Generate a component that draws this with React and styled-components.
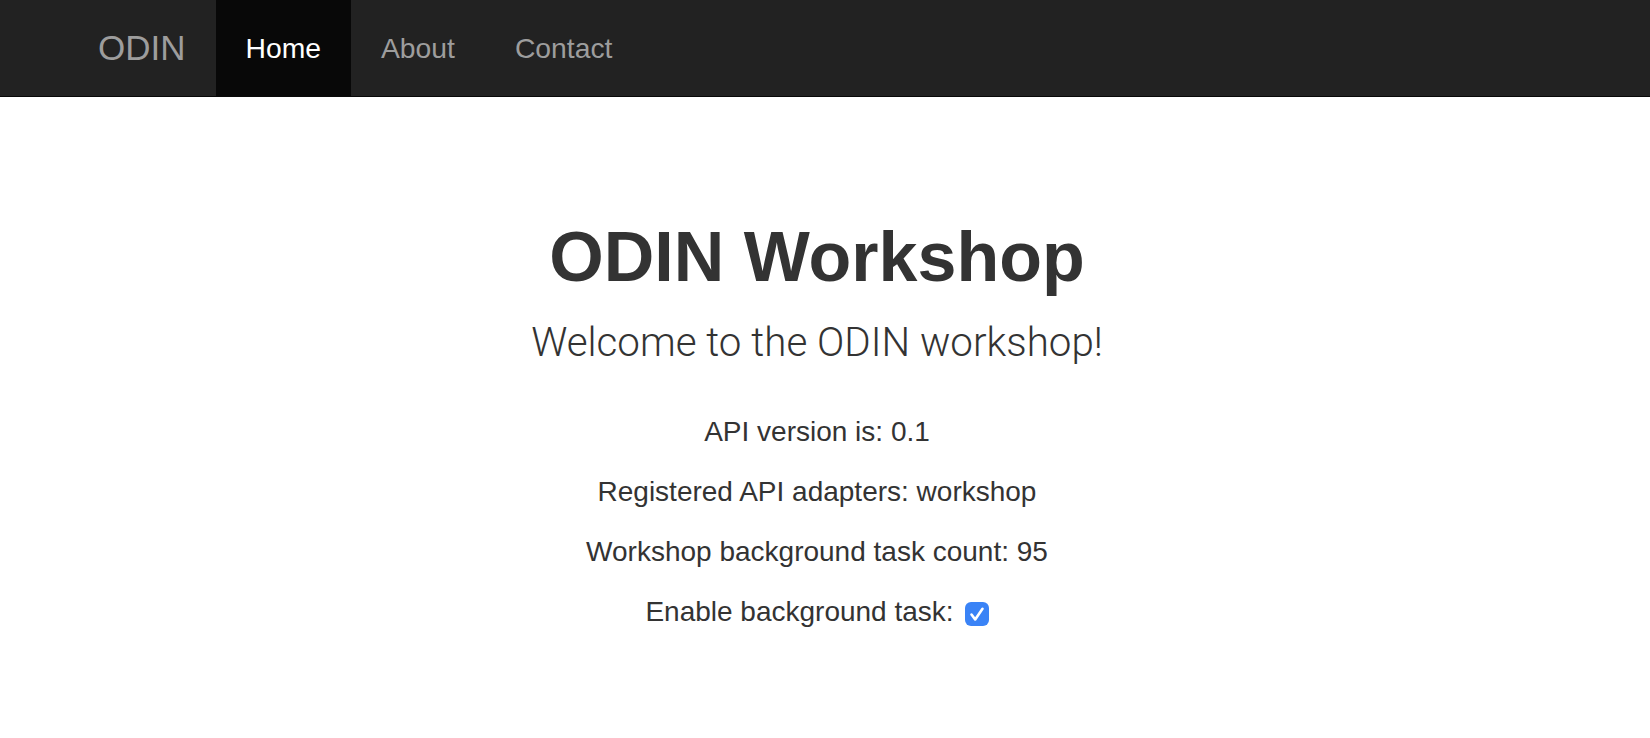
import React, { useState } from 'react';
import styled, { createGlobalStyle } from 'styled-components';

const GlobalStyle = createGlobalStyle`
  html, body {
    margin: 0;
    padding: 0;
    background: #fff;
  }
  body {
    font-family: "Liberation Sans", Arial, sans-serif;
    color: #333;
  }
`;

const Navbar = styled.nav`
  display: flex;
  align-items: stretch;
  height: 96px;
  padding-left: 69px;
  background: #222;
  border-bottom: 1px solid #080808;
`;

const Brand = styled.a`
  display: flex;
  align-items: center;
  padding: 0 30px 0 29px;
  font-size: 35px;
  color: #9d9d9d;
  text-decoration: none;
`;

const NavList = styled.ul`
  display: flex;
  margin: 0;
  padding: 0;
  list-style: none;
`;

const NavLink = styled.a`
  display: flex;
  align-items: center;
  height: 100%;
  padding: 0 30px;
  font-size: 28.3px;
  text-decoration: none;
  color: ${props => (props.active ? '#fff' : '#9d9d9d')};
  background: ${props => (props.active ? '#080808' : 'transparent')};
`;

const Jumbotron = styled.main`
  display: flex;
  flex-direction: column;
  align-items: center;
  padding: 122px 16px 0 0;
  text-align: center;
`;

const Title = styled.h1`
  margin: 0;
  font-size: 70px;
  line-height: 77px;
  font-weight: 700;
  color: #333;
`;

const Lead = styled.p`
  margin: 17px 0 39px;
  font-family: Roboto, "Liberation Sans", sans-serif;
  font-weight: 300;
  font-size: 40.3px;
  line-height: 60px;
  color: #333;
`;

const Info = styled.p`
  display: flex;
  align-items: center;
  margin: 0 0 20px;
  font-size: 28px;
  line-height: 40px;
`;

const Check = styled.span`
  display: inline-flex;
  align-items: center;
  justify-content: center;
  width: 24px;
  height: 24px;
  margin: 3px 0 0 11px;
  border-radius: 6px;
  box-sizing: border-box;
  background: ${props => (props.checked ? '#3a83f6' : '#fff')};
  border: ${props => (props.checked ? 'none' : '1px solid #999')};
  cursor: pointer;
`;

function App() {
  const [enabled, setEnabled] = useState(true);
  const links = ['Home', 'About', 'Contact'];

  return (
    <>
      <GlobalStyle />
      <Navbar>
        <Brand href="#">ODIN</Brand>
        <NavList>
          {links.map((name, i) => (
            <li key={name}>
              <NavLink href="#" active={i === 0 ? 1 : 0}>{name}</NavLink>
            </li>
          ))}
        </NavList>
      </Navbar>
      <Jumbotron>
        <Title>ODIN Workshop</Title>
        <Lead>Welcome to the ODIN workshop!</Lead>
        <Info>API version is: 0.1</Info>
        <Info>Registered API adapters: workshop</Info>
        <Info>Workshop background task count: 95</Info>
        <Info>
          Enable background task:
          <Check
            role="checkbox"
            aria-checked={enabled}
            checked={enabled}
            onClick={() => setEnabled(!enabled)}
          >
            {enabled && (
              <svg width="24" height="24" viewBox="0 0 24 24">
                <path d="M6.5 12.5 L10.2 17.5 L17.5 6.8" fill="none" stroke="#fff" strokeWidth="2.6" strokeLinecap="round" strokeLinejoin="round" />
              </svg>
            )}
          </Check>
        </Info>
      </Jumbotron>
    </>
  );
}

export default App;
